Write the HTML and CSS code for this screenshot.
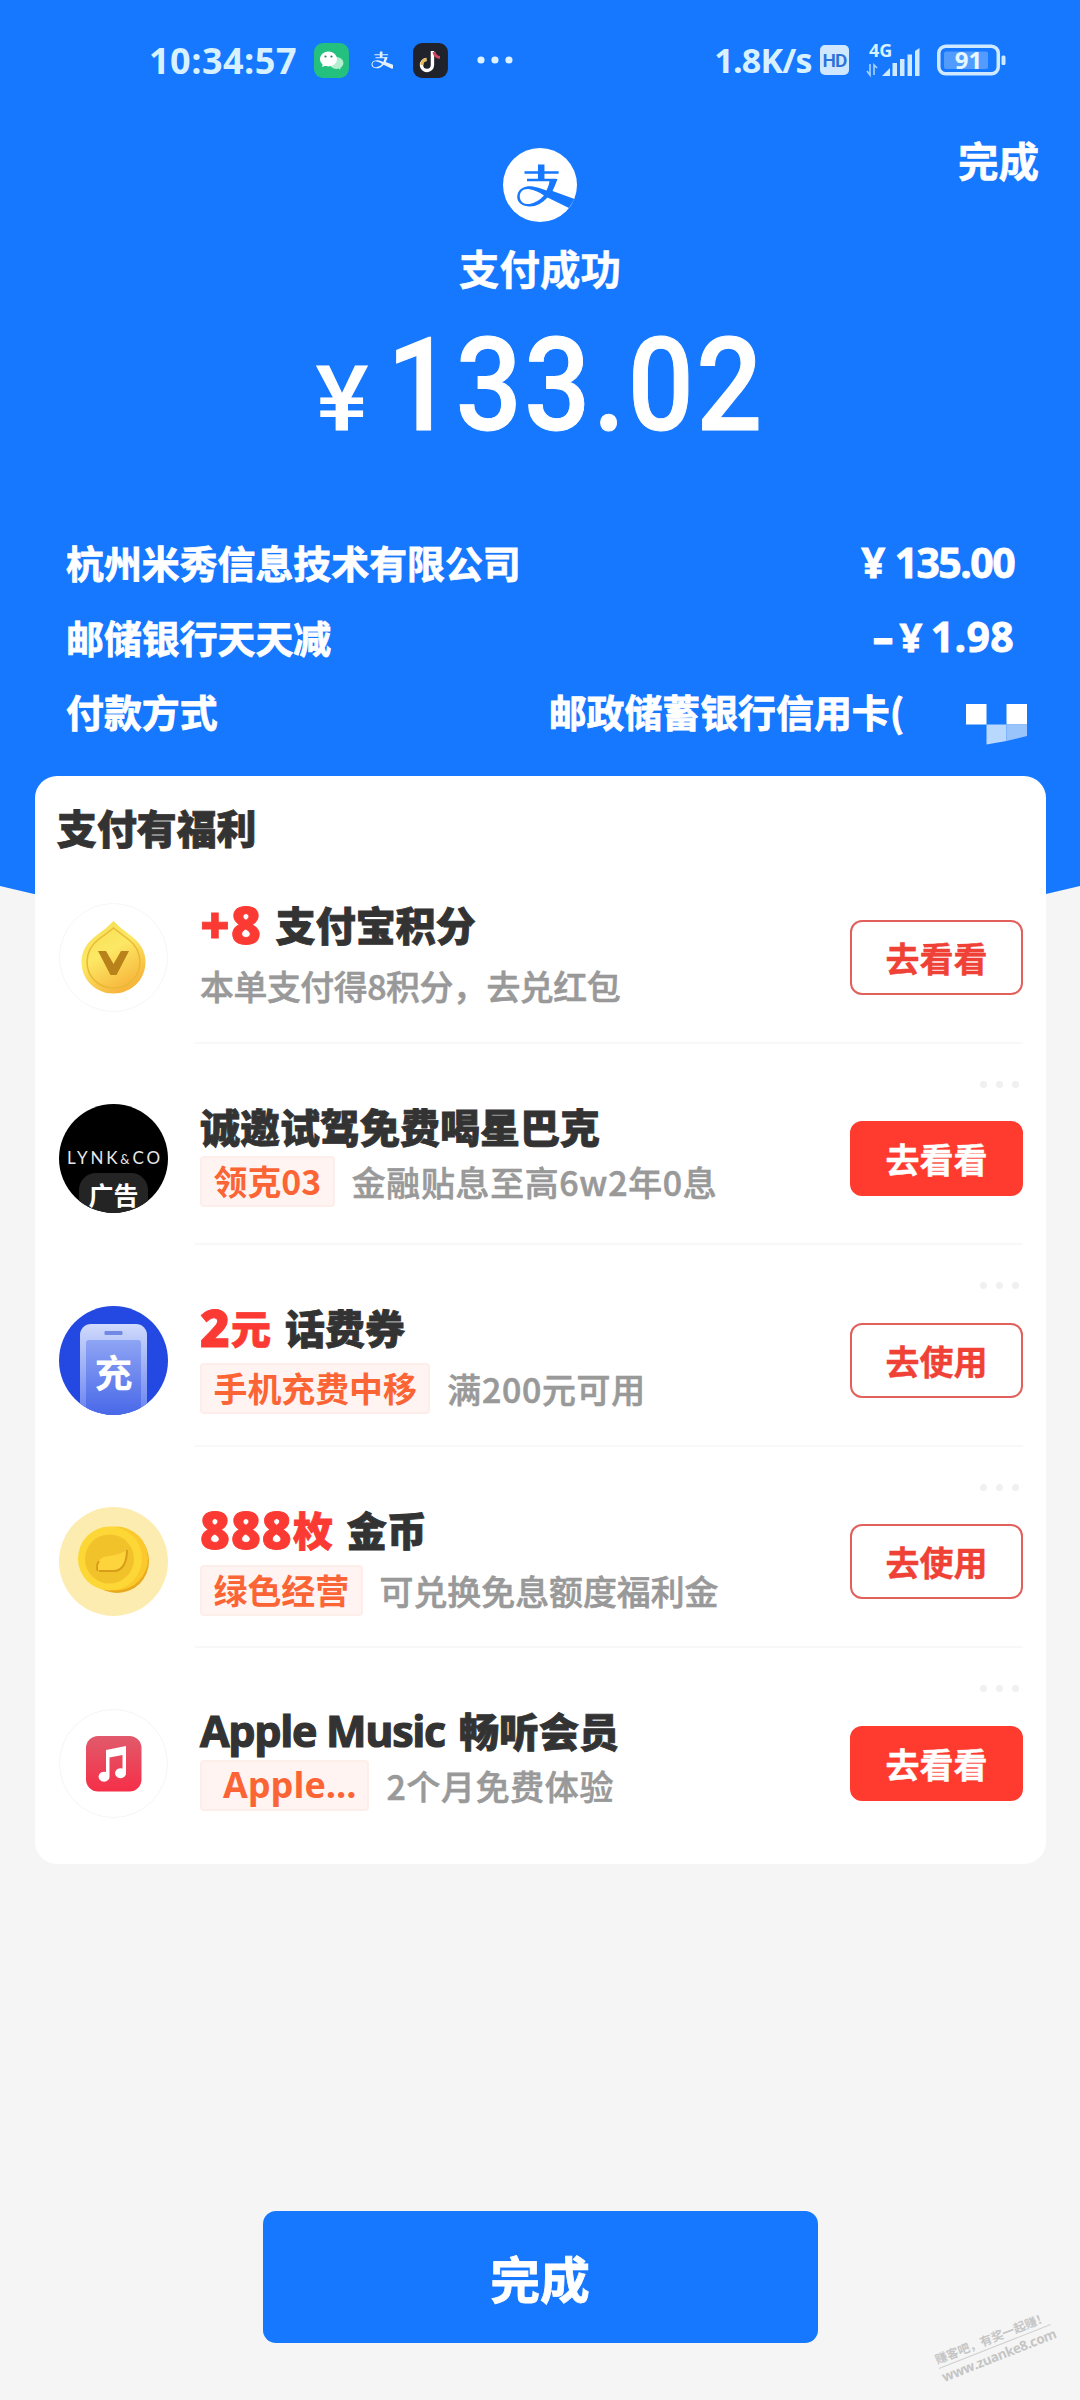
FILE: index.html
```html
<!DOCTYPE html>
<html lang="zh-CN">
<head>
<meta charset="utf-8">
<title>支付成功</title>
<link rel="stylesheet" href="styles.css">
</head>
<body>
<svg width="0" height="0" class="defs">
  <symbol id="zhi" viewBox="0 0 74 74">
    <path d="M21.5 24.5H55.6M24 32H53" fill="none" stroke="currentColor" stroke-width="2.6"/>
    <path d="M38.2 16.5V32" fill="none" stroke="currentColor" stroke-width="6.5"/>
    <path d="M47 31L54.5 31Q52 38 49.5 43L71.5 51L66 60L44.5 49.5Q36 59 26 58.5C17 58 13 52.500 14.500 46.500C16 39.500 24 37.500 30 38.500Q36 39.500 43.500 42.500Q46 38 47 31ZM41 47.500Q33 42 26.500 41.200C20 40.500 16.500 44 16.800 49C17.200 54.500 22 56.500 26.500 56Q34 55 41 47.500Z" fill="currentColor" fill-rule="evenodd"/>
  </symbol>
</svg>
<main class="page">
  <div class="backdrop"></div>
  <header class="status">
    <span class="clock">10:34:57</span>
    <svg class="app wechat" width="35" height="35" viewBox="0 0 35 35"><rect width="35" height="35" rx="9" fill="#24c07d"/><ellipse cx="22.500" cy="20" rx="7" ry="6" fill="#b5edd0"/><path d="M23 22l3 5 1-4z" fill="#b5edd0"/><ellipse cx="14.500" cy="16" rx="8.600" ry="7.400" fill="#fff"/><path d="M9 20l-1 4 5-2z" fill="#fff"/><circle cx="11.500" cy="13.500" r="1.100" fill="#24805d"/><circle cx="17.500" cy="13.500" r="1.100" fill="#24805d"/></svg>
    <svg class="mini-zhi" width="25" height="25" viewBox="8 8 62 62"><use href="#zhi" width="74" height="74"/></svg>
    <svg class="app" width="35" height="35" viewBox="0 0 35 35"><rect width="35" height="35" rx="9" fill="#20222c"/><path d="M13.500 16.500A5.500 5.500 0 1 0 19.500 22V8" fill="none" stroke="#fff" stroke-width="3.400"/><path d="M13.500 16.200A5.500 5.500 0 0 0 9 22" fill="none" stroke="#e8b94e" stroke-width="3"/><path d="M21 9Q22 14 27 14.500" fill="none" stroke="#d2455b" stroke-width="3"/></svg>
    <svg class="more" width="36" height="8" viewBox="0 0 36 8"><g fill="#dcf3ff"><circle cx="4" cy="4" r="3.600"/><circle cx="18" cy="4" r="3.600"/><circle cx="32" cy="4" r="3.600"/></g></svg>
    <span class="speed">1.8K/s</span>
    <span class="hd">HD</span>
    <svg class="signal" width="58" height="36" viewBox="0 0 58 36"><text x="3" y="14.500" class="net">4G</text><g fill="#cfeaff"><path d="M16 34L24 26V34Z"/><rect x="26.500" y="21" width="4.500" height="13"/><rect x="34" y="17" width="4.500" height="17"/><rect x="41.500" y="12.500" width="4.500" height="21.500"/><path d="M49 9l4.500-3V34H49ZM"/></g><path d="M4 22V33L1 29M8 33V23L11 26" fill="none" stroke="#a9d3ff" stroke-width="1.600"/></svg>
    <svg class="battery" width="69" height="32" viewBox="0 0 69 32"><rect x="1.800" y="2.300" width="59.500" height="27.500" rx="7" fill="none" stroke="#cfeaff" stroke-width="3.500"/><rect x="7" y="7.500" width="44" height="17.500" rx="2" fill="#529cff"/><rect x="64.500" y="11.500" width="4" height="9.500" rx="1.500" fill="#cfeaff"/><text x="31.500" y="25" text-anchor="middle" class="level">91</text></svg>
  </header>
  <nav class="top"><span>完成</span></nav>
  <section class="result">
    <svg width="74" height="74" viewBox="0 0 74 74"><circle cx="37" cy="37" r="37" fill="#fff"/><use href="#zhi" width="74" height="74" color="#1677ff"/></svg>
    <h1>支付成功</h1>
    <div class="total"><span class="yen">¥</span><span class="sum">133.02</span></div>
  </section>
  <dl class="detail">
    <div><dt>杭州米秀信息技术有限公司</dt><dd class="num"><i>¥</i>135.00</dd></div>
    <div><dt>邮储银行天天减</dt><dd class="num light"><b>–</b><i>¥</i>1.98</dd></div>
    <div class="pay"><dt>付款方式</dt><dd>邮政储蓄银行信用卡(<svg width="62" height="41" viewBox="0 0 62 41"><path d="M0 0h20.500v20.500H0zM40.500 0H61v20.500H40.500z" fill="#fff"/><path d="M20.500 20.500h20V37L20.500 40.500z" fill="#b9d8fd"/><path d="M40.500 20.500H61V32L40.500 37z" fill="#98c3fb"/></svg></dd></div>
  </dl>
  <section class="card">
    <h2>支付有福利</h2>
    <article class="row">
      <svg class="icon" viewBox="0 0 109 109"><defs><linearGradient id="drop" x1="0" y1="0" x2=".5" y2="1"><stop offset="0" stop-color="#f3dc50"/><stop offset=".5" stop-color="#fde865"/><stop offset="1" stop-color="#f7b73d"/></linearGradient></defs><circle cx="54.500" cy="54.500" r="54" fill="#fff" stroke="#f6f6f6"/><path d="M54.500 18Q61 25 71 32C81 39 86.500 48 86.500 59C86.500 77 72 90.500 54.500 90.500C37 90.500 22.500 77 22.500 59C22.500 48 28 39 38 32Q48 25 54.500 18Z" fill="url(#drop)"/><path d="M54.500 25Q62 31 69 36C77 42 81 49 81 59C81 74 69 85 54.500 85C40 85 28 74 28 59C28 49 32 42 40 36Q47 31 54.500 25Z" fill="none" stroke="#e9b935" stroke-width="1.500"/><path d="M39 48H47L54.500 61L62 48H70L57.500 72H51.500Z" fill="#b98119"/></svg>
      <div class="text"><h3><em class="big">+8</em> 支付宝积分</h3><p class="low">本单支付得8积分，去兑红包</p></div>
      <a class="btn">去看看</a>
    </article>
    <article class="row">
      <svg class="icon" viewBox="0 0 109 109"><defs><clipPath id="disc"><circle cx="54.500" cy="54.500" r="54.500"/></clipPath></defs><g clip-path="url(#disc)"><rect width="109" height="109"/><rect x="20" y="69" width="69" height="50" rx="17" fill="#242424"/></g><text x="54.500" y="60" textLength="93" text-anchor="middle" class="lynk">LYNK<tspan class="amp">&amp;</tspan>CO</text><text x="54.500" y="101" text-anchor="middle" class="ad">广告</text></svg>
      <div class="text tight"><h3>诚邀试驾免费喝星巴克</h3><p><span class="tag">领克03</span><span class="wide">金融贴息至高6w2年0息</span></p></div>
      <a class="btn solid">去看看</a><span class="dots"><i></i><i></i><i></i></span>
    </article>
    <article class="row">
      <svg class="icon" viewBox="0 0 109 109"><defs><linearGradient id="phone" x1="0" y1="0" x2="0" y2="1"><stop offset="0" stop-color="#cfdafc"/><stop offset="1" stop-color="#5c78ee"/></linearGradient><linearGradient id="screen" x1="0" y1="0" x2="0" y2="1"><stop offset="0" stop-color="#8ea4f3"/><stop offset="1" stop-color="#4464e8"/></linearGradient></defs><g clip-path="url(#disc)"><rect width="109" height="109" fill="#2449e2"/><rect x="21" y="18" width="67" height="100" rx="11" fill="url(#phone)"/><rect x="27" y="34" width="55" height="80" rx="3" fill="url(#screen)"/></g><rect x="45.500" y="25" width="18" height="4" rx="1" fill="#7189e2"/><text x="54.500" y="81" text-anchor="middle" class="chong">充</text></svg>
      <div class="text"><h3><em><span class="big">2</span>元</em> 话费券</h3><p><span class="tag">手机充费中移</span><span class="wide">满200元可用</span></p></div>
      <a class="btn">去使用</a><span class="dots"><i></i><i></i><i></i></span>
    </article>
    <article class="row">
      <svg class="icon" viewBox="0 0 109 109"><circle cx="54.500" cy="54.500" r="54.500" fill="#fdecb0"/><circle cx="58" cy="54" r="32" fill="#e9a91c"/><circle cx="57" cy="51.500" r="32" fill="#fbc92b"/><circle cx="51" cy="51.500" r="32" fill="#fcd736"/><circle cx="50.500" cy="52" r="24.500" fill="#f2c22a"/><path d="M39 64C36 55 41 50 50 49Q60 48 68 43C68 56 63 64 55 64Z" fill="#fdd43c"/><path d="M38.500 64Q37 58 40 54M68 43C68 56 63 64 55 64H40" fill="none" stroke="#d99d1c" stroke-width="2"/></svg>
      <div class="text"><h3><em><span class="big">888</span>枚</em> 金币</h3><p><span class="tag">绿色经营</span>可兑换免息额度福利金</p></div>
      <a class="btn">去使用</a><span class="dots"><i></i><i></i><i></i></span>
    </article>
    <article class="row last">
      <svg class="icon" viewBox="0 0 109 109"><defs><linearGradient id="music" x1="0" y1="0" x2="0" y2="1"><stop offset="0" stop-color="#e15a6c"/><stop offset="1" stop-color="#f52f48"/></linearGradient></defs><circle cx="54.500" cy="54.500" r="54" fill="#fff" stroke="#f5f5f5"/><rect x="27" y="27" width="55.500" height="55.500" rx="12" fill="url(#music)"/><path d="M47 41L67 37V63.500A5.500 5 0 1 1 63.500 59.500V46L50.500 48.500V67A5.500 5 0 1 1 47 63Z" fill="#fff"/></svg>
      <div class="text tight"><h3><span class="latin">Apple Music</span> 畅听会员</h3><p><span class="tag apple">Apple...</span><span class="wide">2个月免费体验</span></p></div>
      <a class="btn solid">去看看</a><span class="dots"><i></i><i></i><i></i></span>
    </article>
  </section>
  <button class="done">完成</button>
  <div class="mark"><span class="slogan">赚客吧，有奖一起赚！</span><span class="site">www.zuanke8.com</span></div>
</main>
</body>
</html>
```
FILE: styles.css
```css
* { box-sizing: border-box; margin: 0; padding: 0; }
body { width: 1080px; font-family: "Noto Sans CJK SC", sans-serif; font-weight: 700; }
i, em { font-style: normal; }
.defs { position: absolute; }
.page { position: relative; height: 2400px; background: #f5f5f5; overflow: hidden; display: flex; flex-direction: column; color: #fff; }
.backdrop { position: absolute; inset: 0 0 auto; height: 895px; background: #1677ff; clip-path: polygon(0 0, 100% 0, 100% 886px, 1046px 894px, 34px 894px, 0 886px); }
.page > * { flex: none; }
.page > :not(.backdrop):not(.mark) { position: relative; }

.status { height: 120px; padding: 0 74px 0 149px; display: flex; align-items: center; color: #d8f1ff; font-family: "Open Sans", sans-serif; }
.clock { width: 165px; font-size: 36px; letter-spacing: .5px; }
.mini-zhi { margin: 0 20px 0 20px; color: #e3f1ff; }
.more { margin-left: 29px; }
.speed { margin-left: 201px; width: 106px; font-size: 34px; letter-spacing: -.8px; white-space: nowrap; }
.hd { width: 29px; height: 30px; border-radius: 5px; background: #cfe8ff; color: #2d72d8; font: 600 19px/31px Roboto, sans-serif; text-align: center; letter-spacing: -1px; }
.signal { margin-left: 17px; overflow: visible; }
.net { font: 700 18px "Open Sans", sans-serif; fill: #d8f1ff; }
.battery { margin-left: 13px; overflow: visible; }
.level { font: 700 24px "Open Sans", sans-serif; fill: #e6f7ff; }

.top { height: 28px; padding: 10px 41px 0; text-align: right; font-size: 40.500px; line-height: 60px; -webkit-text-stroke: .6px; }
.result { height: 382px; display: flex; flex-direction: column; align-items: center; }
h1 { margin-top: 16px; font-size: 40.500px; line-height: 60px; -webkit-text-stroke: .5px; }
.total { margin-top: 22px; width: 460px; height: 110px; padding-left: 2px; display: flex; align-items: baseline; font-family: Roboto, sans-serif; font-weight: 500; line-height: 131px; }
.yen { width: 73px; padding-left: 3px; font-size: 90px; transform: scaleX(1.12); transform-origin: left; }
.sum { margin-left: 24px; font-size: 130px; letter-spacing: 2.800px; transform: scaleX(.895); transform-origin: left; -webkit-text-stroke: 1px; }

.detail { height: 246px; padding: 0 66px; font-size: 37.900px; -webkit-text-stroke: .8px; }
.detail div { height: 74.500px; display: flex; justify-content: space-between; line-height: 63px; }
.num { font-family: "Open Sans", sans-serif; font-size: 41px; letter-spacing: -1.600px; }
.num i { margin-right: 11px; font-size: 42px; }
.num.light { letter-spacing: .3px; }
.num.light i { margin-right: 8px; font-size: 40px; }
.num b { margin-right: 6px; }
.pay dd { display: flex; margin-right: -14px; }
.pay svg { margin: 25px 0 0 62px; }

.card { margin: 0 34px 0 35px; height: 1088px; border-radius: 22px; background: #fff; color: #333; }
h2 { height: 66px; padding: 21px 0 0 22px; font-size: 39.900px; line-height: 60px; font-weight: 900; -webkit-text-stroke: .8px; }
.row { position: relative; height: 201.500px; margin: 0 23px 0 24px; padding-top: 29px; display: flex; align-items: center; }
.row:not(.last)::after { content: ""; position: absolute; left: 136px; right: 0; bottom: 0; height: 2px; background: #f8f8f8; }
.icon { width: 109px; height: 109px; }
.text { flex: 1; align-self: flex-start; margin: 26px 0 0 32px; white-space: nowrap; }
h3 { height: 54px; line-height: 54px; font-size: 40px; font-weight: 900; display: flex; gap: 14px; align-items: baseline; -webkit-text-stroke: .8px; }
em { color: #fb3a33; }
.big { display: inline-block; font-family: "Open Sans", sans-serif; font-size: 51px; line-height: 0; font-weight: 800; letter-spacing: 1px; transform: translateY(3px); }
.latin { font-family: "Open Sans", sans-serif; font-size: 43px; line-height: 0; font-weight: 700; letter-spacing: -1.300px; -webkit-text-stroke: 1.200px; }
.text p { margin-top: 9px; height: 51px; display: flex; align-items: center; gap: 17px; font-size: 33.900px; color: #999; font-weight: 500; -webkit-text-stroke: .6px; }
.text p.low { letter-spacing: -.450px; }
.wide { letter-spacing: .7px; }
.text.tight p { margin-top: 3px; }
.tag { height: 51px; padding: 0 11.500px; border: 2px solid #fdeeea; border-radius: 4px; background: #fff4f2; color: #fb6535; line-height: 46px; font-weight: 700; -webkit-text-stroke: 0; }
.apple { padding: 0 11px 0 21px; font-size: 36px; font-family: "Open Sans", sans-serif; }
.btn { width: 173px; height: 75px; border: 2px solid #e2605b; border-radius: 12px; color: #f04137; font-size: 34px; line-height: 72px; text-align: center; -webkit-text-stroke: .4px; }
.solid { background: #ff3b30; border-color: #ff3b30; color: #fff; }
.dots { position: absolute; top: 37px; right: 4px; display: flex; gap: 9px; }
.dots i { width: 7px; height: 7px; border-radius: 50%; background: #f0f0f0; }
.lynk { font: 400 17px Lato, sans-serif; fill: #e8e8e8; }
.amp { font-size: 13px; }
.ad { font-size: 25px; fill: #fff; }
.chong { font-size: 38px; fill: #fff; }

.done { margin: 347px auto 0; width: 555px; height: 132px; border: 0; border-radius: 13px; background: #1677ff; color: #fff; font: 700 49.800px/130px "Noto Sans CJK SC", sans-serif; -webkit-text-stroke: .8px; }
.mark { position: absolute; left: 935px; top: 2328px; width: 120px; transform: rotate(-21.500deg); color: #c5c5c5; text-align: center; white-space: nowrap; }
.slogan { display: block; height: 19px; border-bottom: 1.500px solid #d0d0d0; font-size: 12px; line-height: 17px; }
.site { display: block; font: 700 13.500px/19px "Open Sans", sans-serif; letter-spacing: -.4px; }
```
